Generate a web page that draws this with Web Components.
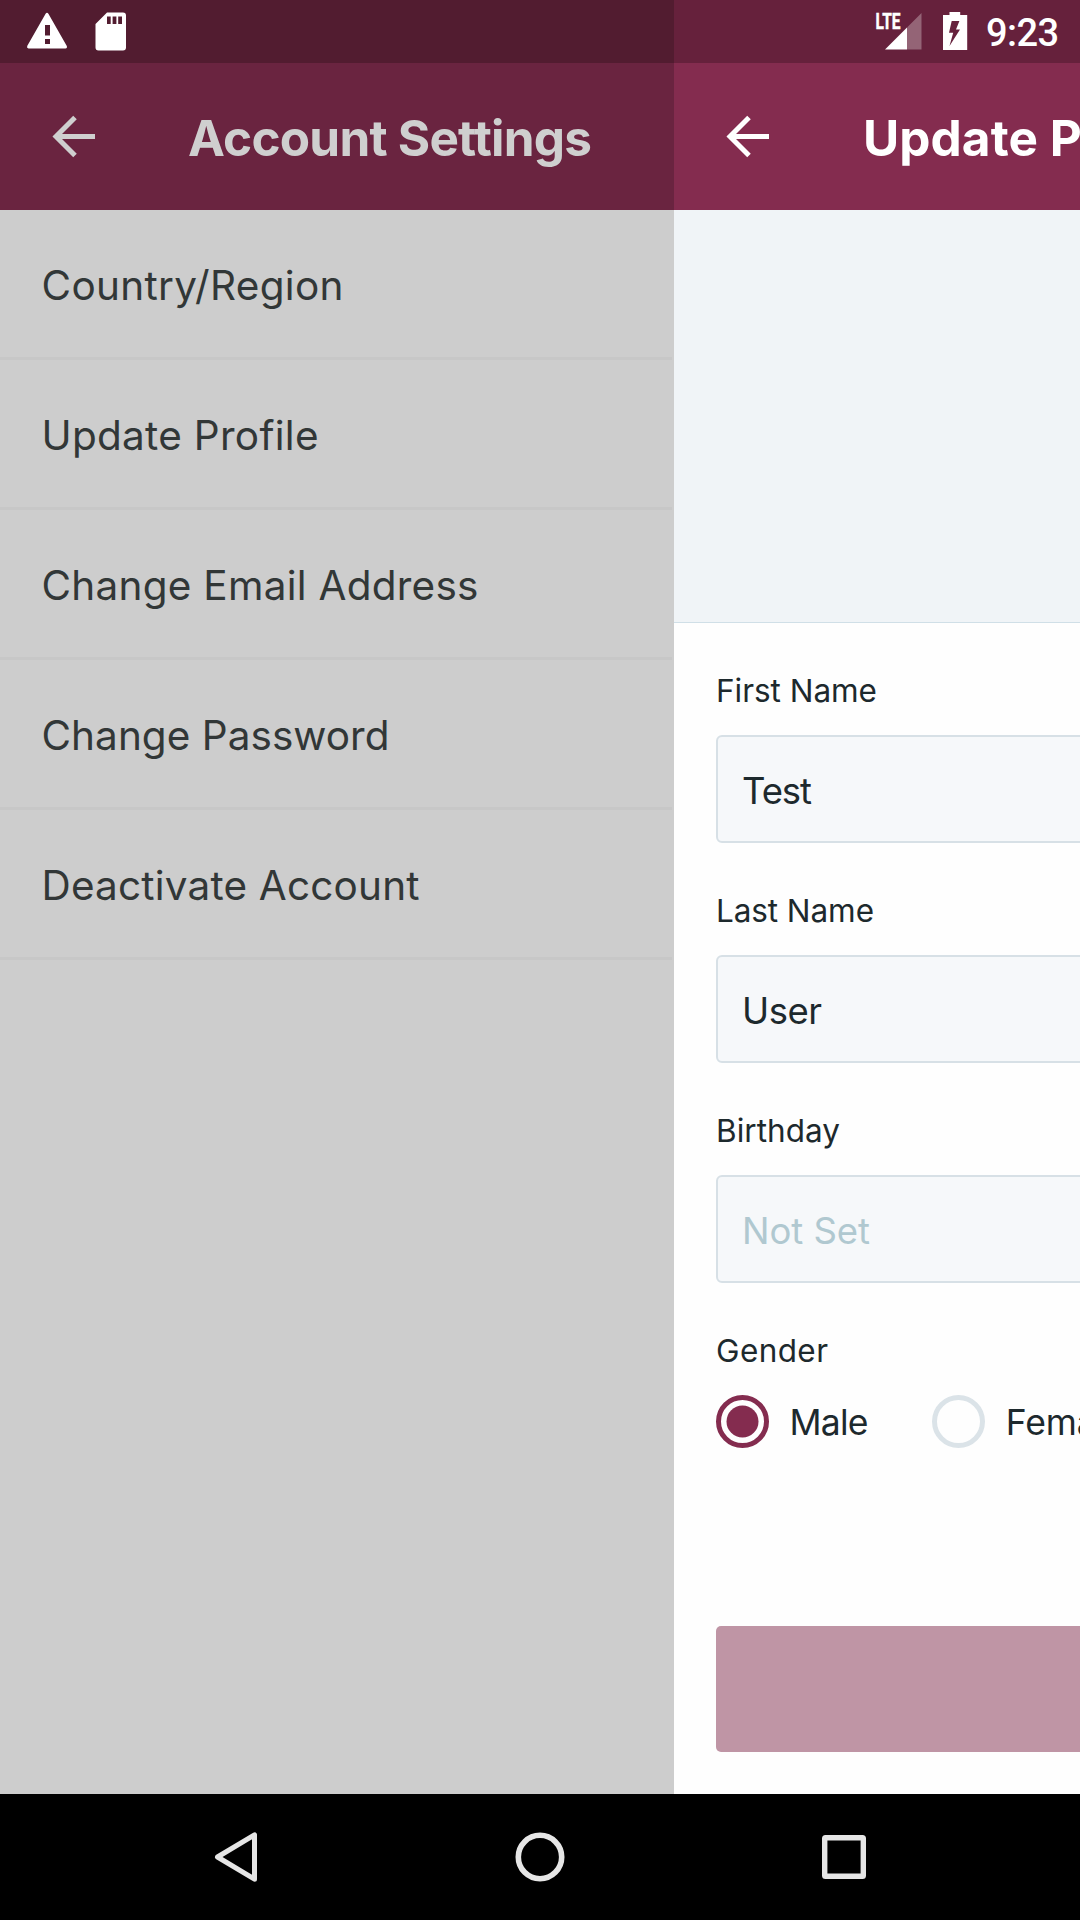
<!DOCTYPE html>
<html lang="en">
<head>
<meta charset="utf-8">
<title>Account Settings</title>
<style>
html,body{margin:0;height:100%;background:#000}
body{font-family:Inter,"Open Sans",sans-serif;overflow:hidden}
</style>
</head>
<body>
<phone-app></phone-app>
<script>
const define = (name, css, html, extra) => {
  const t = document.createElement('template');
  t.innerHTML = `<style>*{box-sizing:border-box}${css}</style>${html}`;
  customElements.define(name, class extends HTMLElement {
    constructor() {
      super();
      this.attachShadow({mode: 'open'}).append(t.content.cloneNode(true));
    }
    connectedCallback() { if (extra) extra.call(this); }
  });
};

// Text tracked so that its advance width equals the w attribute.
define('fit-text', ':host{display:block;white-space:nowrap}span{display:inline-block}', '<span><slot></slot></span>', function () {
  const s = this.shadowRoot.querySelector('span');
  const fit = () => {
    s.style.letterSpacing = '0px';
    const n = this.textContent.length - 1;
    s.style.letterSpacing = (this.getAttribute('w') - s.getBoundingClientRect().width) / n + 'px';
  };
  fit();
  requestAnimationFrame(fit);
});

define('status-bar', `
:host{display:flex;justify-content:space-between;height:63px;width:1080px;color:#fff;background:linear-gradient(90deg,#521c30 674px,#66213c 674px)}
svg{display:block;flex:none}
.right{display:flex}
.time{font:500 38px/67px Roboto,sans-serif;width:95px;padding-left:1px;letter-spacing:-.6px}
`, `
<svg width="140" height="63" viewBox="0 0 140 63" fill="#fff">
  <path fill-rule="evenodd" d="M45.6 13.7q1.4-1.8 2.8 0L66.8 46q.7 2.4-1.3 2.4h-37q-2-.2-1.3-2.4zM45 25v10.600h5V25zM45 39v5h5v-5z"/>
  <path fill-rule="evenodd" d="M107 12.600h16q3 0 3 3V47.500q0 3-3 3H98.500q-3 0-3-3V24zM107 16.500V24h3.700v-7.500zM112.600 16.500V24h3.800v-7.500zM118.200 16.500V24h3.800v-7.500z"/>
</svg>
<div class="right">
<svg width="115" height="63" viewBox="870 0 115 63" fill="#fff">
  <path d="M921.500 13v36.500H907V27.500z" opacity=".3"/>
  <path d="M907 27.500v22h-22z"/>
  <text x="875.500" y="29.200" font-family="Roboto" font-weight="700" font-size="22.500" stroke="#fff" stroke-width=".5" textLength="25" lengthAdjust="spacingAndGlyphs">LTE</text>
  <path fill-rule="evenodd" d="M949.500 12h10.700v3h7v35H943V15h6.500zM951.700 21L949 32.700h4.200L949.500 46 960 29.500h-4l3.400-8.500z"/>
</svg>
<div class="time">9:23</div></div>`);

define('app-header', `
:host{display:flex;align-items:center;height:147px;flex:none;padding-left:49px;overflow:hidden;background:var(--bar);color:var(--ink)}
svg{display:block;flex:none;margin-right:91px}
.t{font-size:49.500px;font-weight:700;line-height:60px;padding-top:2px;margin-left:var(--shift,0)}
`, `
<svg width="48" height="48" viewBox="0 0 48 48" fill="none" stroke="currentColor" stroke-width="5"><path d="M46 23.500H7M26 4.500L7 23.500l19 19"/></svg>
<div class="t"><slot></slot></div>`);

define('list-row', `
:host{display:flex;align-items:center;height:150px;border-bottom:3px solid #c7c7c7;padding:4px 0 0 41.500px;margin-right:2px;font-size:40.500px;color:#323737}
`, '<slot></slot>');

define('form-field', `
:host{display:block}
.l{font-size:31.500px;line-height:40px;height:40px;margin-bottom:24px}
.b{display:flex;align-items:center;height:108px;border:2px solid #d7e0e6;border-radius:6px;background:#f6f8fa;padding:4px 0 0 24px;font-size:36.500px}
`, '<div class="l"><slot name="label"></slot></div><div class="b"><slot></slot></div>');

define('radio-option', `
:host{display:flex;align-items:center;font-size:35.500px}
svg{display:block;flex:none;margin-right:20px;color:#dbe3e8}
.d{display:none}
:host([checked]) .d{display:block}
:host([checked]) svg{color:#842c4f}
.t{padding:2px 0 0 .500px}
`, `
<svg width="53" height="53" viewBox="0 0 53 53"><circle cx="26.500" cy="26.500" r="24" fill="none" stroke="currentColor" stroke-width="5"/><circle class="d" cx="26.500" cy="26.500" r="16" fill="currentColor"/></svg>
<div class="t"><slot></slot></div>`);

define('settings-screen', `
:host{display:block;width:674px;flex:none;background:#cdcdcd;--bar:#6a2440;--ink:#cfcfcf;overflow:hidden}
`, `
<app-header><fit-text w="404">Account Settings</fit-text></app-header>
<list-row><fit-text w="302">Country/Region</fit-text></list-row>
<list-row><fit-text w="277">Update Profile</fit-text></list-row>
<list-row><fit-text w="437">Change Email Address</fit-text></list-row>
<list-row><fit-text w="348">Change Password</fit-text></list-row>
<list-row><fit-text w="378">Deactivate Account</fit-text></list-row>`);

/* The profile form is a full 1080px screen; only its leading part is in view. */
define('profile-screen', `
:host{display:block;width:406px;flex:none;overflow:hidden;background:#fefefe;--bar:#842c4f;--ink:#fff;color:#1d292d}
.page{display:flex;flex-direction:column;width:1080px;height:1731px}
.photo{height:413px;flex:none;background:#f0f4f7;border-bottom:1px solid #d0dfe7}
form{display:flex;flex-direction:column;flex:1;gap:48px;padding:48px 42px 42px;margin:0;min-height:0}
.g{font-size:31.500px;line-height:40px;margin-bottom:24px}
.r{display:flex;gap:64.500px}
.ph{color:#b0c8d0}
.save{height:126px;margin-top:auto;border-radius:5px;background:#bf95a5}
`, `
<div class="page">
<app-header style="--shift:1px"><fit-text w="345">Update Profile</fit-text></app-header>
<div class="photo"></div>
<form>
<form-field><fit-text slot="label" w="161">First Name</fit-text><fit-text w="70">Test</fit-text></form-field>
<form-field><fit-text slot="label" w="158">Last Name</fit-text><fit-text w="80">User</fit-text></form-field>
<form-field><fit-text slot="label" w="124">Birthday</fit-text><fit-text class="ph" w="128">Not Set</fit-text></form-field>
<div><div class="g"><fit-text w="112">Gender</fit-text></div>
<div class="r"><radio-option checked><fit-text w="79">Male</fit-text></radio-option><radio-option><fit-text w="120">Female</fit-text></radio-option></div></div>
<div class="save"></div>
</form></div>`);

define('nav-bar', ':host{display:block;height:126px;background:#000}svg{display:block}', `
<svg width="1080" height="126" viewBox="0 1794 1080 126" fill="none" stroke="#e6e6e6" stroke-linejoin="round">
  <path d="M217.500 1857L254.500 1834.800V1879.200z" stroke-width="5"/>
  <circle cx="540" cy="1857" r="21.700" stroke-width="5.600"/>
  <rect x="824.700" y="1837.700" width="38.600" height="38.600" rx=".8" stroke-width="5.400"/>
</svg>`);

define('phone-app', `
:host{display:flex;flex-direction:column;width:1080px;height:1920px;overflow:hidden}
.s{display:flex;height:1731px}
`, '<status-bar></status-bar><div class="s"><settings-screen></settings-screen><profile-screen></profile-screen></div><nav-bar></nav-bar>');
</script>
</body>
</html>
